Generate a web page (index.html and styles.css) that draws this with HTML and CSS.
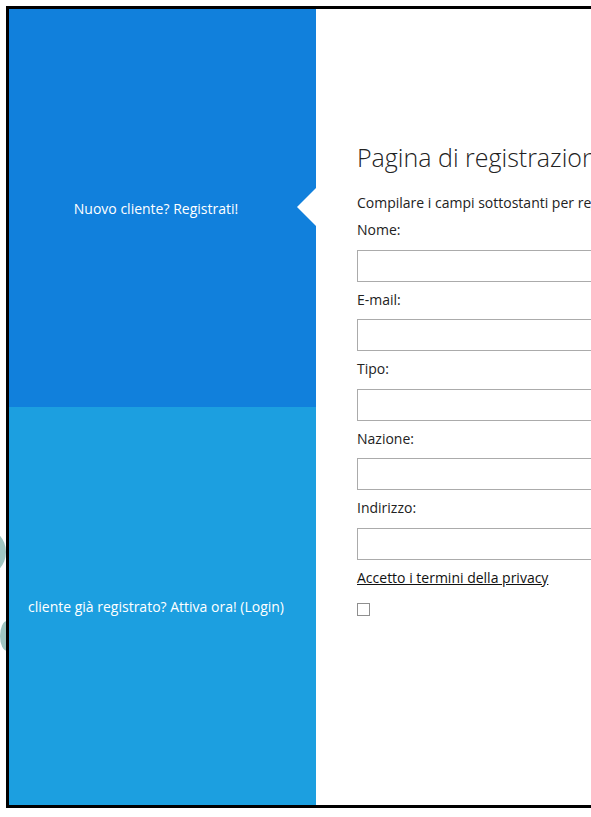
FILE: index.html
```html
<!DOCTYPE html>
<html lang="it">
<head>
<meta charset="utf-8">
<title>Pagina di registrazione</title>
<link rel="stylesheet" href="styles.css">
</head>
<body>
<div class="decor decor-a"></div>
<div class="decor decor-b"></div>
<div class="frame">
  <aside class="side">
    <div class="side-item side-new">
      <span>Nuovo cliente? Registrati!</span>
      <div class="notch"></div>
    </div>
    <div class="side-item side-login">
      <span>cliente già registrato? Attiva ora! (Login)</span>
    </div>
  </aside>
  <main class="content">
    <h1 class="title">Pagina di registrazione</h1>
    <p class="intro">Compilare i campi sottostanti per registrarsi</p>
    <form class="form">
      <label class="field"><span class="label">Nome:</span><input class="input" type="text"></label>
      <label class="field"><span class="label">E-mail:</span><input class="input" type="text"></label>
      <label class="field"><span class="label">Tipo:</span><input class="input" type="text"></label>
      <label class="field"><span class="label">Nazione:</span><input class="input" type="text"></label>
      <label class="field"><span class="label">Indirizzo:</span><input class="input" type="text"></label>
      <a class="privacy" href="#">Accetto i termini della privacy</a>
      <span class="check"></span>
    </form>
  </main>
</div>
</body>
</html>
```

FILE: styles.css
```css
html, body {
  margin: 0;
  padding: 0;
  overflow: hidden;
  background: #ffffff;
}
body {
  position: relative;
  width: 591px;
  height: 817px;
  font-family: "Open Sans", "Noto Sans", sans-serif;
}
.decor {
  position: absolute;
  background: #9fc5c1;
  border-radius: 50%;
}
.decor-a {
  left: -40px;
  top: 528px;
  width: 46px;
  height: 48px;
}
.decor-b {
  left: 0;
  top: 621px;
  width: 14px;
  height: 30px;
}
.frame {
  position: relative;
  margin: 6px 0 0 6px;
  width: 800px;
  border-top: 3px solid #000;
  border-left: 3px solid #000;
  border-bottom: 3px solid #000;
  display: flex;
  background: #fff;
}
.side {
  width: 307px;
  flex: none;
  display: flex;
  flex-direction: column;
}
.side-item {
  position: relative;
  height: 398px;
  display: flex;
  align-items: center;
  justify-content: center;
  padding-right: 13px;
  box-sizing: border-box;
  color: #fff;
  font-size: 14px;
}
.side-new {
  background: #1180dc;
}
.side-login {
  background: #1c9fe0;
}
.notch {
  position: absolute;
  right: 0;
  top: 179px;
  width: 0;
  height: 0;
  border-top: 19px solid transparent;
  border-bottom: 19px solid transparent;
  border-right: 19px solid #fff;
}
.content {
  flex: 1;
  padding: 131px 0 0 41px;
  color: #222;
}
.title {
  margin: 0;
  font-weight: 300;
  font-size: 25px;
  line-height: 34px;
  color: #222;
  white-space: nowrap;
}
.intro {
  margin: 20px 0 0;
  font-size: 14px;
  line-height: 18px;
  white-space: nowrap;
}
.form {
  display: flex;
  flex-direction: column;
  width: 320px;
}
.field {
  display: flex;
  flex-direction: column;
}
.label {
  font-size: 14px;
  line-height: 17.5px;
  margin: 9px 0 11px;
}
.input {
  box-sizing: border-box;
  width: 320px;
  height: 32px;
  margin: 0;
  border: 1px solid #ababab;
  background: #fff;
  padding: 0 6px;
}
.privacy {
  margin-top: 9px;
  font-size: 14px;
  line-height: 18px;
  color: #111;
  text-decoration: underline;
  align-self: flex-start;
}
.check {
  margin-top: 16px;
  width: 13px;
  height: 13px;
  box-sizing: border-box;
  border: 1px solid #8f8f8f;
  background: #fff;
}
```
